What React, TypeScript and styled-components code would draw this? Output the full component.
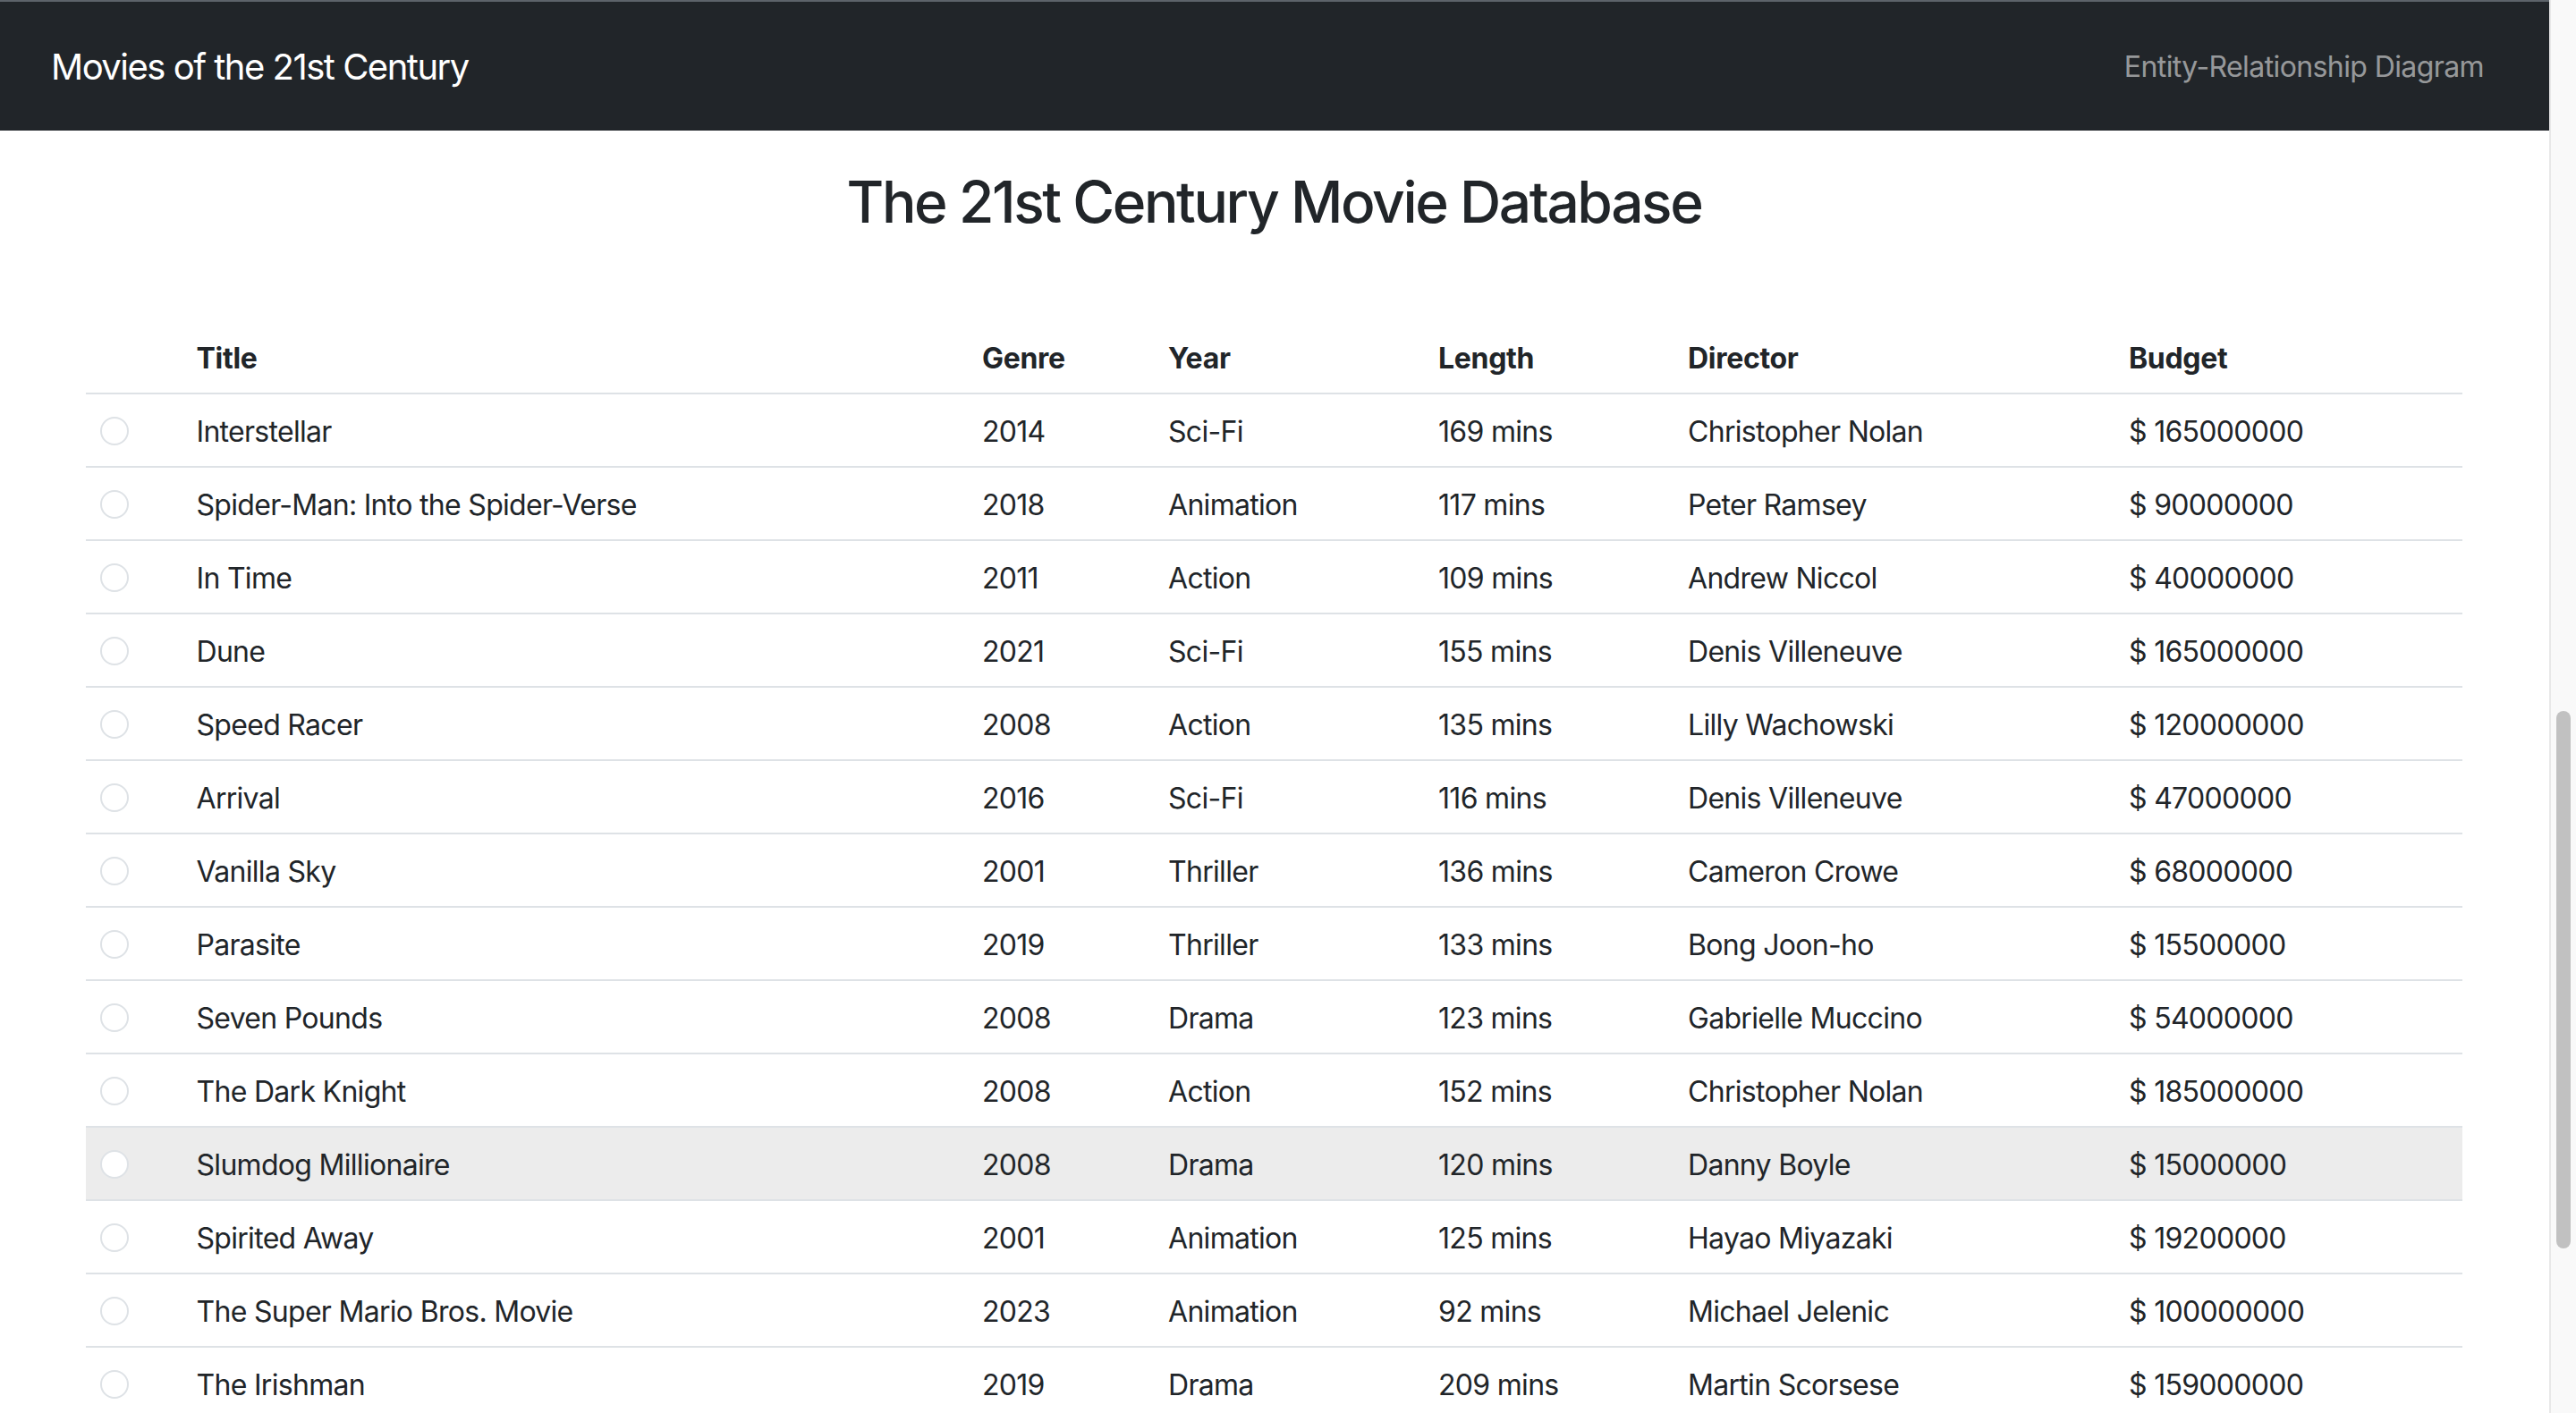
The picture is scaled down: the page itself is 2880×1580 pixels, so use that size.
import React from "react";
import styled, { createGlobalStyle } from "styled-components";

const GlobalStyle = createGlobalStyle`
  html, body {
    margin: 0;
    padding: 0;
    height: 100%;
    overflow: hidden;
    background: #ffffff;
  }
  body {
    font-family: Inter, "Noto Sans", "Liberation Sans", sans-serif;
    color: #212529;
    -webkit-font-smoothing: antialiased;
  }
  * { box-sizing: border-box; }
`;

const Screen = styled.div`
  display: flex;
  height: 100vh;
  width: 100vw;
  overflow: hidden;
`;

const Page = styled.div`
  flex: 1;
  min-width: 0;
  display: flex;
  flex-direction: column;
`;

const Navbar = styled.nav`
  height: 146px;
  flex: none;
  display: flex;
  align-items: center;
  justify-content: space-between;
  padding: 2px 73px 0 57px;
  background: #212529;
  border-top: 2px solid #5d636a;
`;

const Brand = styled.a`
  font-size: 40px;
  line-height: 60px;
  color: #ffffff;
  text-decoration: none;
  letter-spacing: -1.5px;
`;

const NavLink = styled.a`
  font-size: 32px;
  line-height: 48px;
  color: rgba(255, 255, 255, 0.55);
  text-decoration: none;
  letter-spacing: -0.6px;
`;

const Main = styled.main`
  padding: 0 97px 0 96px;
`;

const Heading = styled.h2`
  margin: 42px 0 94px;
  font-size: 64px;
  font-weight: 500;
  line-height: 1.2;
  text-align: center;
  letter-spacing: -2.4px;
`;

const Table = styled.table`
  width: 100%;
  table-layout: fixed;
  border-collapse: collapse;
  font-size: 32px;
  line-height: 48px;
  letter-spacing: -0.7px;
`;

const HeadCell = styled.th<{ $w: number }>`
  width: ${(p) => p.$w}px;
  padding: 18px 16px 14px;
  text-align: left;
  font-weight: 700;
  letter-spacing: -0.3px;
  border-bottom: 2px solid #dee2e6;
  vertical-align: bottom;
  white-space: nowrap;
`;

const Row = styled.tr<{ $active?: boolean }>`
  background: ${(p) => (p.$active ? "#ececec" : "transparent")};
`;

const Cell = styled.td`
  padding: 18px 16px 14px;
  border-bottom: 2px solid #dee2e6;
  vertical-align: middle;
  white-space: nowrap;
  overflow: hidden;
`;

const Radio = styled.span`
  display: block;
  width: 32px;
  height: 32px;
  border-radius: 50%;
  border: 2px solid #dee2e6;
  background: #ffffff;
  margin-top: -2px;
`;

const ScrollTrack = styled.aside`
  width: 30px;
  flex: none;
  background: #f9f9f9;
  border-left: 2px solid #e8e8e8;
  padding: 795px 4px 0 6px;
`;

const ScrollThumb = styled.div`
  width: 16px;
  height: 601px;
  border-radius: 8px;
  background: #c1c1c1;
`;

const columns = [
  { key: "pick", label: "", w: 107.5 },
  { key: "title", label: "Title", w: 878.5 },
  { key: "genre", label: "Genre", w: 208 },
  { key: "year", label: "Year", w: 302 },
  { key: "length", label: "Length", w: 279 },
  { key: "director", label: "Director", w: 493 },
  { key: "budget", label: "Budget", w: 389 },
];

const movies = [
  ["Interstellar", "2014", "Sci-Fi", "169 mins", "Christopher Nolan", "$ 165000000"],
  ["Spider-Man: Into the Spider-Verse", "2018", "Animation", "117 mins", "Peter Ramsey", "$ 90000000"],
  ["In Time", "2011", "Action", "109 mins", "Andrew Niccol", "$ 40000000"],
  ["Dune", "2021", "Sci-Fi", "155 mins", "Denis Villeneuve", "$ 165000000"],
  ["Speed Racer", "2008", "Action", "135 mins", "Lilly Wachowski", "$ 120000000"],
  ["Arrival", "2016", "Sci-Fi", "116 mins", "Denis Villeneuve", "$ 47000000"],
  ["Vanilla Sky", "2001", "Thriller", "136 mins", "Cameron Crowe", "$ 68000000"],
  ["Parasite", "2019", "Thriller", "133 mins", "Bong Joon-ho", "$ 15500000"],
  ["Seven Pounds", "2008", "Drama", "123 mins", "Gabrielle Muccino", "$ 54000000"],
  ["The Dark Knight", "2008", "Action", "152 mins", "Christopher Nolan", "$ 185000000"],
  ["Slumdog Millionaire", "2008", "Drama", "120 mins", "Danny Boyle", "$ 15000000"],
  ["Spirited Away", "2001", "Animation", "125 mins", "Hayao Miyazaki", "$ 19200000"],
  ["The Super Mario Bros. Movie", "2023", "Animation", "92 mins", "Michael Jelenic", "$ 100000000"],
  ["The Irishman", "2019", "Drama", "209 mins", "Martin Scorsese", "$ 159000000"],
];

export default function App() {
  return (
    <>
      <GlobalStyle />
      <Screen>
        <Page>
          <Navbar>
            <Brand href="#">Movies of the 21st Century</Brand>
            <NavLink href="#">Entity-Relationship Diagram</NavLink>
          </Navbar>
          <Main>
            <Heading>The 21st Century Movie Database</Heading>
            <Table>
              <thead>
                <tr>
                  {columns.map((c) => (
                    <HeadCell key={c.key} $w={c.w}>
                      {c.label}
                    </HeadCell>
                  ))}
                </tr>
              </thead>
              <tbody>
                {movies.map((m, i) => (
                  <Row key={m[0]} $active={i === 10}>
                    <Cell>
                      <Radio />
                    </Cell>
                    {m.map((v, j) => (
                      <Cell key={j}>{v}</Cell>
                    ))}
                  </Row>
                ))}
              </tbody>
            </Table>
          </Main>
        </Page>
        <ScrollTrack>
          <ScrollThumb />
        </ScrollTrack>
      </Screen>
    </>
  );
}
